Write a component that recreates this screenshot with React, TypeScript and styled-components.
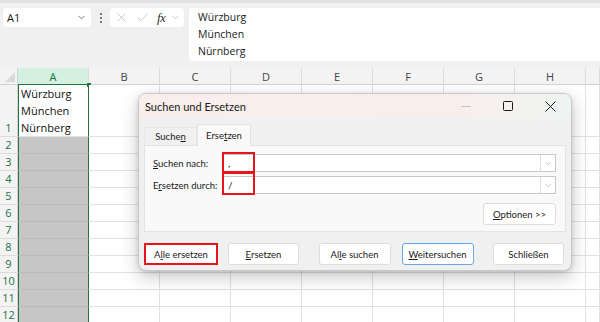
import React from "react";
import styled, { createGlobalStyle } from "styled-components";
import { X, Check, ChevronDown } from "lucide-react";

const GlobalStyle = createGlobalStyle`
  html, body { margin: 0; padding: 0; }
  body { font-family: "Open Sans", "Noto Sans", sans-serif; background: #ffffff; }
  * { box-sizing: border-box; }
`;

const GREEN = "#217346";
const COLS = ["A", "B", "C", "D", "E", "F", "G", "H", ""];
const ROWS = [1, 2, 3, 4, 5, 6, 7, 8, 9, 10, 11, 12];

const Screen = styled.div`
  position: relative;
  width: 600px;
  height: 322px;
  overflow: hidden;
  background: #ffffff;
`;

/* formula bar */
const FormulaBar = styled.div`
  height: 68px;
  background: #f0f0f0;
  border-top: 3px solid #e2e2e2;
  display: flex;
  align-items: flex-start;
  padding: 5px 0 0 3px;
`;

const NameBox = styled.div`
  width: 88px;
  height: 19px;
  background: #ffffff;
  border-radius: 4px;
  display: flex;
  align-items: center;
  justify-content: space-between;
  padding: 0 4px 0 4px;
  font-size: 11px;
  color: #1a1a1a;
`;

const Dots = styled.div`
  width: 19px;
  height: 19px;
  display: flex;
  flex-direction: column;
  align-items: center;
  justify-content: center;
  gap: 2px;
  span {
    width: 2px;
    height: 2px;
    border-radius: 1px;
    background: #555;
  }
`;

const FxBox = styled.div`
  width: 74px;
  height: 19px;
  background: #ffffff;
  border-radius: 4px;
  display: flex;
  align-items: center;
  padding: 0 2px 0 4px;
  gap: 6px;
  color: #b8b8b8;
`;

const FxLabel = styled.span`
  font-family: "Liberation Serif", "DejaVu Serif", serif;
  font-style: italic;
  font-size: 13px;
  color: #333;
  margin-left: 1px;
  letter-spacing: -0.5px;
`;

const FormulaText = styled.div`
  margin-left: 5px;
  flex: 1;
  height: 53px;
  background: #ffffff;
  border-radius: 4px 0 0 4px;
  padding: 1px 0 0 9px;
  font-size: 10.5px;
  line-height: 17px;
  color: #1a1a1a;
`;

/* sheet grid */
const Sheet = styled.div`
  display: grid;
  grid-template-columns: 18px repeat(8, 71px) 1fr;
  grid-template-rows: 17px 52px repeat(11, 17px);
`;

const Corner = styled.div`
  background: #f3f3f3;
  border-bottom: 1px solid #d4d4d4;
  border-right: 1px solid #d4d4d4;
  position: relative;
  &::after {
    content: "";
    position: absolute;
    right: 2px;
    bottom: 2px;
    border-left: 10px solid transparent;
    border-bottom: 10px solid #d9d9d9;
  }
`;

const ColHead = styled.div<{ $active?: boolean }>`
  background: ${(p) => (p.$active ? "#d3f0e0" : "#f3f3f3")};
  color: ${(p) => (p.$active ? GREEN : "#444")};
  border-right: 1px solid #dcdcdc;
  border-bottom: 1px solid ${(p) => (p.$active ? GREEN : "#d4d4d4")};
  font-size: 11px;
  display: flex;
  align-items: center;
  justify-content: center;
`;

const RowHead = styled.div`
  background: #f3f3f3;
  color: ${GREEN};
  border-bottom: 1px solid #dcdcdc;
  border-right: 1px solid #d4d4d4;
  font-size: 11px;
  display: flex;
  align-items: flex-end;
  justify-content: center;
  line-height: 16px;
`;

const Cell = styled.div<{ $col: number; $shade?: boolean }>`
  position: relative;
  background: ${(p) => (p.$shade ? "#c6c6c6" : "#ffffff")};
  border-bottom: 1px solid ${(p) => (p.$shade ? "#bababa" : "#e1e1e1")};
  border-right: 1px solid ${(p) => (p.$col === 0 ? GREEN : "#e1e1e1")};
  border-left: ${(p) => (p.$col === 0 ? `1px solid ${GREEN}` : "none")};
`;

const CellText = styled.div`
  position: absolute;
  left: 2px;
  bottom: 0;
  font-size: 11px;
  line-height: 17px;
  color: #111;
`;

const Handle = styled.span`
  position: absolute;
  top: -2px;
  right: -3px;
  width: 4px;
  height: 4px;
  background: ${GREEN};
`;

/* dialog */
const Dialog = styled.div`
  position: absolute;
  left: 138px;
  top: 93px;
  width: 434px;
  height: 178px;
  background: #f0f0f0;
  border: 1px solid #c9c9c9;
  border-radius: 8px;
  overflow: hidden;
  box-shadow: 0 6px 18px rgba(0, 0, 0, 0.22), 0 1px 4px rgba(0, 0, 0, 0.12);
  font-family: "Lato", "Open Sans", sans-serif;
  color: #1a1a1a;
`;

const TitleBar = styled.div`
  height: 24px;
  display: flex;
  align-items: center;
  background: linear-gradient(90deg, #f9eeec 0%, #f8efed 75%, #eef4f1 100%);
  padding-left: 6px;
`;

const Title = styled.div`
  flex: 1;
  font-size: 11px;
`;

const WinButton = styled.div<{ $dim?: boolean }>`
  width: 42px;
  height: 24px;
  display: flex;
  align-items: center;
  justify-content: center;
  color: ${(p) => (p.$dim ? "#c4c4c4" : "#1a1a1a")};
`;

const Body = styled.div`
  padding: 6px 5px 0 5px;
`;

const Tabs = styled.div`
  display: flex;
  align-items: flex-end;
  height: 21px;
`;

const Tab = styled.div<{ $active?: boolean }>`
  height: ${(p) => (p.$active ? "22px" : "18px")};
  width: ${(p) => (p.$active ? "54px" : "53px")};
  display: flex;
  align-items: center;
  justify-content: center;
  font-size: 9.5px;
  background: ${(p) => (p.$active ? "#f9f9f9" : "#f0f0f0")};
  border: 1px solid ${(p) => (p.$active ? "#e3e3e3" : "#e8e8e8")};
  border-bottom: none;
  margin-bottom: ${(p) => (p.$active ? "-1px" : "0")};
  position: relative;
  z-index: 1;
`;

const Panel = styled.div`
  height: 87px;
  background: #f9f9f9;
  border: 1px solid #e3e3e3;
  padding: 8px 9px 0 8px;
`;

const FieldRow = styled.div`
  display: grid;
  grid-template-columns: 69px 1fr;
  align-items: center;
  margin-bottom: 4px;
`;

const Label = styled.div`
  font-size: 9.5px;
`;

const Input = styled.div`
  position: relative;
  height: 18px;
  background: #ffffff;
  border: 1px solid #c8c8c8;
  display: flex;
  align-items: center;
  justify-content: space-between;
  padding-left: 5px;
  font-size: 10px;
`;

const DropButton = styled.div`
  width: 15px;
  height: 16px;
  border-left: 1px solid #dedede;
  display: flex;
  align-items: center;
  justify-content: center;
  color: #9a9a9a;
`;

const Highlight = styled.div<{ $top: number; $height: number }>`
  position: absolute;
  left: -1px;
  top: ${(p) => p.$top}px;
  width: 33px;
  height: ${(p) => p.$height}px;
  border: 2px solid #e8141c;
`;

const OptionsRow = styled.div`
  display: flex;
  justify-content: flex-end;
  margin-top: 9px;
`;

const Button = styled.div<{ $width?: number; $variant?: "red" | "focus" }>`
  width: ${(p) => p.$width ?? 72}px;
  height: 22px;
  background: #ffffff;
  border: ${(p) =>
    p.$variant === "red"
      ? "2px solid #e8141c"
      : p.$variant === "focus"
      ? "1px solid #6aa6e6"
      : "1px solid #dddddd"};
  border-radius: ${(p) => (p.$variant === "red" ? "0" : "3px")};
  display: flex;
  align-items: center;
  justify-content: center;
  font-size: 9.5px;
  color: #1a1a1a;
`;

const Footer = styled.div`
  display: flex;
  justify-content: space-between;
  margin-top: 11px;
  padding-right: 2px;
`;

const ButtonPair = styled.div<{ $gap: number }>`
  display: flex;
  gap: ${(p) => p.$gap}px;
`;

const Acc = styled.span`
  text-decoration: underline;
  text-underline-offset: 1px;
`;

export default function App() {
  return (
    <Screen>
      <GlobalStyle />
      <FormulaBar>
        <NameBox>
          <span>A1</span>
          <ChevronDown size={11} color="#444" strokeWidth={1.6} />
        </NameBox>
        <Dots>
          <span />
          <span />
          <span />
        </Dots>
        <FxBox>
          <X size={15} strokeWidth={1.2} />
          <Check size={15} strokeWidth={1.2} />
          <FxLabel>fx</FxLabel>
          <ChevronDown size={9} color="#999" strokeWidth={1.5} />
        </FxBox>
        <FormulaText>
          Würzburg
          <br />
          München
          <br />
          Nürnberg
        </FormulaText>
      </FormulaBar>

      <Sheet>
        <Corner />
        {COLS.map((c, i) => (
          <ColHead key={"h" + i} $active={c === "A"}>
            {c}
          </ColHead>
        ))}
        {ROWS.map((r) => (
          <React.Fragment key={r}>
            <RowHead>{r}</RowHead>
            {COLS.map((_, ci) => (
              <Cell key={ci} $col={ci} $shade={ci === 0 && r > 1}>
                {ci === 0 && r === 1 && (
                  <>
                    <Handle />
                    <CellText>
                      Würzburg
                      <br />
                      München
                      <br />
                      Nürnberg
                    </CellText>
                  </>
                )}
              </Cell>
            ))}
          </React.Fragment>
        ))}
      </Sheet>

      <Dialog>
        <TitleBar>
          <Title>Suchen und Ersetzen</Title>
          <WinButton $dim>
            <svg width="10" height="10" viewBox="0 0 10 10">
              <path d="M0 5.5h10" stroke="currentColor" strokeWidth="1" />
            </svg>
          </WinButton>
          <WinButton>
            <svg width="10" height="10" viewBox="0 0 10 10">
              <rect x="0.5" y="0.5" width="9" height="9" rx="1" fill="none" stroke="currentColor" strokeWidth="1" />
            </svg>
          </WinButton>
          <WinButton>
            <svg width="11" height="11" viewBox="0 0 11 11">
              <path d="M0.5 0.5l10 10M10.5 0.5l-10 10" stroke="currentColor" strokeWidth="1" />
            </svg>
          </WinButton>
        </TitleBar>
        <Body>
          <Tabs>
            <Tab>
              <span>
                Suche<Acc>n</Acc>
              </span>
            </Tab>
            <Tab $active>
              <span>
                Erse<Acc>t</Acc>zen
              </span>
            </Tab>
          </Tabs>
          <Panel>
            <FieldRow>
              <Label>
                <Acc>S</Acc>uchen nach:
              </Label>
              <Input>
                <span>,</span>
                <DropButton>
                  <ChevronDown size={9} strokeWidth={1.4} />
                </DropButton>
                <Highlight $top={-3} $height={21} />
              </Input>
            </FieldRow>
            <FieldRow>
              <Label>
                E<Acc>r</Acc>setzen durch:
              </Label>
              <Input>
                <span>/</span>
                <DropButton>
                  <ChevronDown size={9} strokeWidth={1.4} />
                </DropButton>
                <Highlight $top={-5} $height={23} />
              </Input>
            </FieldRow>
            <OptionsRow>
              <Button $width={73}>
                <span>
                  <Acc>O</Acc>ptionen &gt;&gt;
                </span>
              </Button>
            </OptionsRow>
          </Panel>
          <Footer>
            <ButtonPair $gap={10}>
              <Button $width={74} $variant="red">
                <span>
                  A<Acc>l</Acc>le ersetzen
                </span>
              </Button>
              <Button $width={71}>
                <span>
                  <Acc>E</Acc>rsetzen
                </span>
              </Button>
            </ButtonPair>
            <ButtonPair $gap={11}>
              <Button>
                <span>
                  Al<Acc>l</Acc>e suchen
                </span>
              </Button>
              <Button $variant="focus">
                <span>
                  <Acc>W</Acc>eitersuchen
                </span>
              </Button>
            </ButtonPair>
            <Button $width={71}>Schließen</Button>
          </Footer>
        </Body>
      </Dialog>
    </Screen>
  );
}
